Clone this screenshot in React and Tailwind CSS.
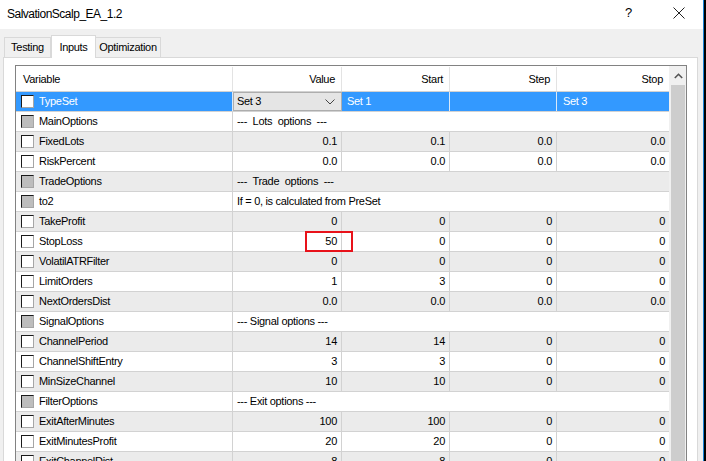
import React from "react";

const rows = [
  { name: "TypeSet", kind: "combo", value: "Set 3", start: "Set 1", step: "", stop: "Set 3" },
  { name: "MainOptions", kind: "group", text: "---  Lots  options  ---" },
  { name: "FixedLots", value: "0.1", start: "0.1", step: "0.0", stop: "0.0" },
  { name: "RiskPercent", value: "0.0", start: "0.0", step: "0.0", stop: "0.0" },
  { name: "TradeOptions", kind: "group", text: "---  Trade  options  ---" },
  { name: "to2", kind: "group", text: "If = 0, is calculated from PreSet" },
  { name: "TakeProfit", value: "0", start: "0", step: "0", stop: "0" },
  { name: "StopLoss", value: "50", start: "0", step: "0", stop: "0", marked: true },
  { name: "VolatilATRFilter", value: "0", start: "0", step: "0", stop: "0" },
  { name: "LimitOrders", value: "1", start: "3", step: "0", stop: "0" },
  { name: "NextOrdersDist", value: "0.0", start: "0.0", step: "0.0", stop: "0.0" },
  { name: "SignalOptions", kind: "group", text: "--- Signal options ---" },
  { name: "ChannelPeriod", value: "14", start: "14", step: "0", stop: "0" },
  { name: "ChannelShiftEntry", value: "3", start: "3", step: "0", stop: "0" },
  { name: "MinSizeChannel", value: "10", start: "10", step: "0", stop: "0" },
  { name: "FilterOptions", kind: "group", text: "--- Exit options ---" },
  { name: "ExitAfterMinutes", value: "100", start: "100", step: "0", stop: "0" },
  { name: "ExitMinutesProfit", value: "20", start: "20", step: "0", stop: "0" },
  { name: "ExitChannelDist", value: "8", start: "8", step: "0", stop: "0" },
];

// old-style sunken checkbox: dark top/left edge, light bottom/right edge
function Check({ grey }) {
  return (
    <span
      className={`w-[13px] h-[13px] shrink-0 border-t-[1.5px] border-l-[1.5px] border-r border-b border-t-[#1a1a1a] border-l-[#1a1a1a] border-r-[#a6a6a6] border-b-[#a6a6a6] ${grey ? "bg-[#bdbdbd]" : "bg-white"}`}
    />
  );
}

function Row({ row, index }) {
  const selected = row.kind === "combo";
  const bg = selected ? "bg-[#3399ff]" : index % 2 === 0 ? "bg-[#ebebeb]" : "bg-white";
  const line = selected ? "border-[#d9e8f8]" : "border-[#d2d2d2]";

  return (
    <div className={`flex h-[20px] border-b border-[#d2d2d2] ${bg}`}>
      <div className={`w-[217px] shrink-0 flex items-center gap-[5px] pl-[5px] border-r ${line}`}>
        <Check grey={row.kind === "group"} />
        <span className={selected ? "text-white" : "text-black"}>{row.name}</span>
      </div>

      {row.kind === "group" ? (
        <div className="flex-1 flex items-center pl-[4px] whitespace-pre">{row.text}</div>
      ) : selected ? (
        <>
          <div className="w-[109px] shrink-0 flex items-center justify-between pl-[3px] pr-[6px] bg-[#e5e5e5] border border-[#adadad]">
            <span>{row.value}</span>
            <svg width="10" height="6" viewBox="0 0 10 6" className="mt-[1px]">
              <polyline points="0.5,0.5 5,5 9.5,0.5" fill="none" stroke="#444" strokeWidth="1" />
            </svg>
          </div>
          <div className={`w-[108px] shrink-0 flex items-center pl-[5px] text-white border-r ${line}`}>{row.start}</div>
          <div className={`w-[107px] shrink-0 flex items-center pl-[5px] text-white border-r ${line}`}>{row.step}</div>
          <div className="w-[112px] shrink-0 flex items-center pl-[6px] text-white">{row.stop}</div>
        </>
      ) : (
        <>
          <div className="relative w-[109px] shrink-0 flex items-center justify-end pr-[4px] border-r border-[#d2d2d2]">
            {row.value}
            {row.marked && (
              <span className="absolute z-10 left-[72px] top-[-1px] w-[48px] h-[21px] border-2 border-[#e8121a]" />
            )}
          </div>
          <div className="w-[108px] shrink-0 flex items-center justify-end pr-[4px] border-r border-[#d2d2d2]">{row.start}</div>
          <div className="w-[107px] shrink-0 flex items-center justify-end pr-[4px] border-r border-[#d2d2d2]">{row.step}</div>
          <div className="w-[112px] shrink-0 flex items-center justify-end pr-[4px]">{row.stop}</div>
        </>
      )}
    </div>
  );
}

export default function App() {
  return (
    <div
      className="flex w-[706px] h-[461px] overflow-hidden bg-black text-black"
      style={{ fontFamily: '"Liberation Sans", Arial, sans-serif' }}
    >
      <div className="w-[703px] shrink-0 flex flex-col bg-[#f0f0f0]">
        {/* title bar */}
        <div className="h-[29px] shrink-0 bg-white flex items-center pl-[7px] text-[12px] tracking-[-0.5px] text-black">
          <span className="flex-1 pb-[2px]">SalvationScalp_EA_1.2</span>
          <span className="w-[10px] text-[13px] mr-[38px] pb-[3px]">?</span>
          <svg width="12" height="12" viewBox="0 0 12 12" className="mr-[18px] mb-[3px]">
            <path d="M0.5 0.5 L11.5 11.5 M11.5 0.5 L0.5 11.5" stroke="#222" strokeWidth="1" />
          </svg>
        </div>

        {/* tabs */}
        <div className="h-[28px] shrink-0 flex items-end pl-[4px] text-[11px] tracking-[-0.3px]">
          <div className="h-[20px] w-[47px] flex items-center justify-center bg-[#f0f0f0] border border-b-0 border-[#d9d9d9]">
            Testing
          </div>
          <div className="relative z-10 -mb-px h-[23px] w-[45px] flex items-start justify-center pt-[3px] bg-white border border-b-0 border-[#d9d9d9]">
            Inputs
          </div>
          <div className="h-[20px] w-[65px] flex items-center justify-center bg-[#f0f0f0] border border-l-0 border-b-0 border-[#d9d9d9]">
            Optimization
          </div>
        </div>

        {/* tab panel */}
        <div className="flex-1 ml-[3px] mr-[5px] bg-white border border-b-0 border-[#d9d9d9] pl-[11px] pr-[10px] pt-[7px]">
          <div className="flex border border-b-0 border-[#828282] h-full text-[11px] tracking-[-0.3px]">
            <div className="w-[653px] shrink-0 flex flex-col">
              <div className="h-[26px] shrink-0 flex border-b border-[#d2d2d2] bg-white pt-[1px]">
                <div className="w-[217px] flex items-center pl-[7px] border-r border-[#e3e3e3]">Variable</div>
                <div className="w-[109px] flex items-center justify-end pr-[6px] border-r border-[#e3e3e3]">Value</div>
                <div className="w-[108px] flex items-center justify-end pr-[6px] border-r border-[#e3e3e3]">Start</div>
                <div className="w-[107px] flex items-center justify-end pr-[6px] border-r border-[#e3e3e3]">Step</div>
                <div className="w-[112px] flex items-center justify-end pr-[6px]">Stop</div>
              </div>
              {rows.map((row, i) => (
                <Row key={row.name} row={row} index={i} />
              ))}
            </div>

            {/* scrollbar */}
            <div className="w-[17px] shrink-0 flex flex-col bg-[#f0f0f0] border-l border-[#f0f0f0]">
              <div className="h-[19px] shrink-0 flex items-center justify-center">
                <svg width="9" height="6" viewBox="0 0 9 6">
                  <polyline points="0.8,5 4.5,1.3 8.2,5" fill="none" stroke="#555" strokeWidth="1.6" />
                </svg>
              </div>
              <div className="flex-1 mx-[1px] bg-[#cdcdcd]" />
            </div>
          </div>
        </div>
      </div>
      <div className="w-px shrink-0 bg-[#1883d7]" />
    </div>
  );
}
